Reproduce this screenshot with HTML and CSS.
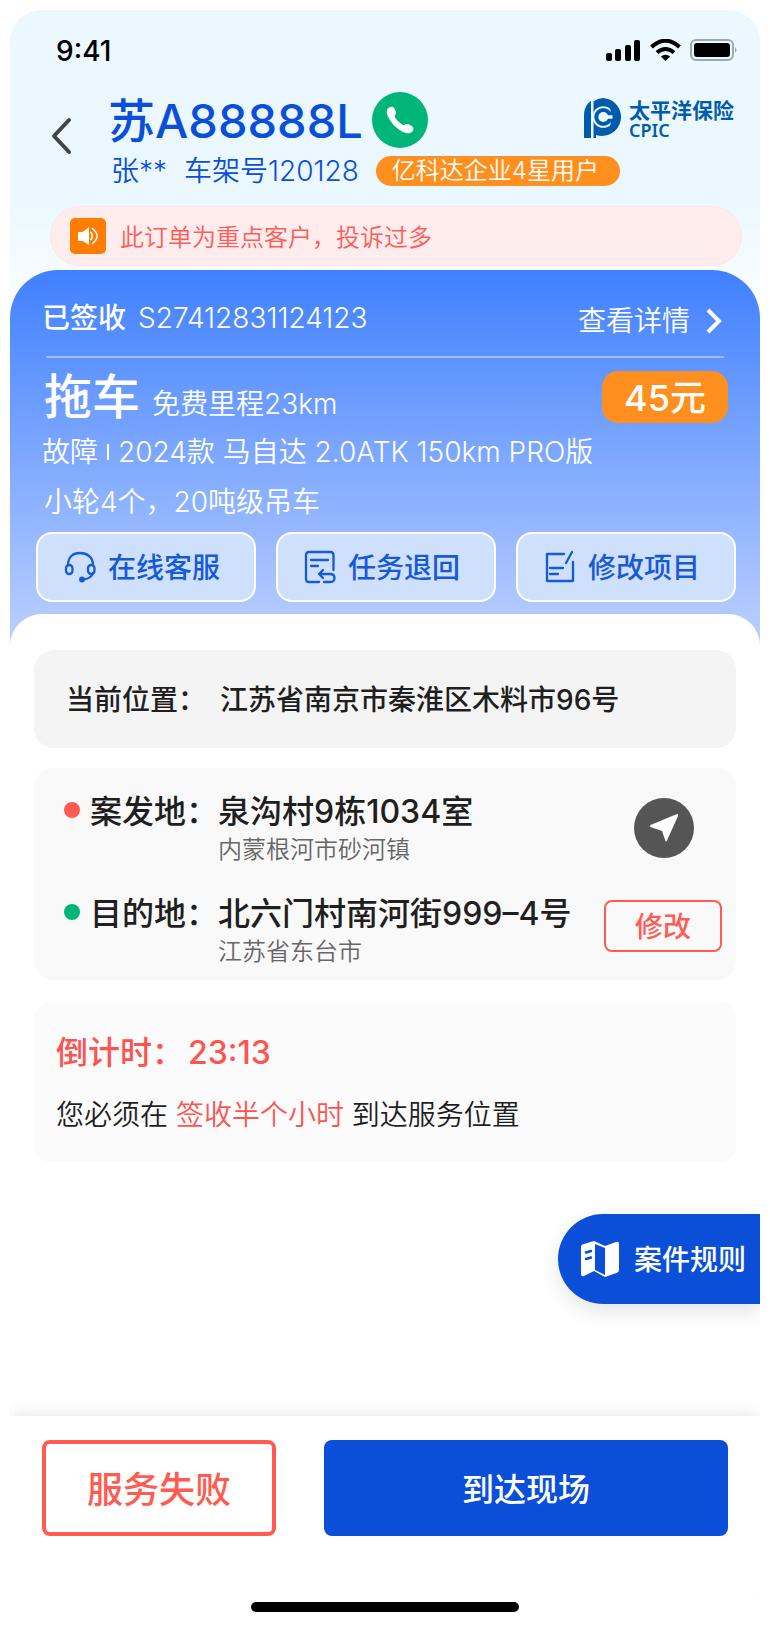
FILE: index.html
```html
<!DOCTYPE html>
<html lang="zh-CN">
<head>
<meta charset="utf-8">
<meta name="viewport" content="width=device-width, initial-scale=1">
<title>拖车任务</title>
<link rel="stylesheet" href="styles.css">
</head>
<body>
<div class="app">
  <header class="top">
    <div class="status-bar">
      <span class="clock">9:41</span>
      <svg class="status-icons" width="134" height="24" viewBox="0 0 134 24" aria-hidden="true">
        <rect x="0" y="14" width="6" height="8" rx="2"/>
        <rect x="9" y="10" width="6" height="12" rx="2"/>
        <rect x="19" y="6" width="6" height="16" rx="2"/>
        <rect x="28" y="1" width="6" height="21" rx="2"/>
        <g fill="none" stroke="#000" stroke-width="4">
          <path d="M45.500 8Q59.500 -4.500 73.500 8"/>
          <path d="M51 13.500Q59.500 6.500 68 13.500"/>
        </g>
        <path d="M59.500 22L54.800 17.600Q59.500 14 64.200 17.600Z"/>
        <rect x="85" y="1" width="42" height="20" rx="5" fill="none" stroke="#9fa8ad" stroke-width="2"/>
        <rect x="88" y="4" width="36" height="14" rx="3"/>
        <path d="M129 8Q132 11 129 14Z" fill="#9fa8ad"/>
      </svg>
    </div>
    <div class="title-bar">
      <button class="back" type="button" aria-label="返回">
        <svg width="22" height="38" viewBox="0 0 22 38"><path d="M19 3L4 19L19 35" fill="none" stroke="#444" stroke-width="4" stroke-linecap="round" stroke-linejoin="round"/></svg>
      </button>
      <div class="customer">
        <div class="plate-row">
          <h1 class="plate">苏A88888L</h1>
          <button class="call" type="button" aria-label="拨打电话">
            <svg width="28" height="28" viewBox="0 0 28 28"><path d="M3 1.500C5 .3 7.500 .5 8.500 2.500L10 6C10.500 7.500 9.500 8.800 8.500 10C9 13 15 18.500 18 19.200C19.500 18 21 17.500 22.500 18.300L25.800 20C27.500 21 28 23.500 26.800 25C24.500 28 20.500 28 16 25.500C9.500 22 4 15.500 1.500 9.500C.3 6.500 .5 3.200 3 1.500Z" fill="#fff"/></svg>
          </button>
        </div>
        <div class="owner-row">
          <span>张**</span>
          <span class="vin">车架号120128</span>
          <span class="user-tag">亿科达企业4星用户</span>
        </div>
      </div>
      <div class="insurer">
        <svg width="40" height="42" viewBox="0 0 40 42" fill="#005bac" aria-hidden="true">
          <path d="M8 4V41H1V18C1 12 3.500 7 8 4Z"/>
          <path d="M10.500 4.500A19 19 0 0 1 20 1A19 19 0 1 1 13 38V41H10.500Z"/>
          <circle cx="20.300" cy="20" r="10.800" fill="#ebf8ff"/>
          <path d="M27.500 9H33V31H27.500Z"/>
          <circle cx="20.300" cy="20" r="9"/>
          <circle cx="20.300" cy="20" r="5" fill="#ebf8ff"/>
          <path d="M22 18.300H29.500V21.700H22Z" fill="#ebf8ff"/>
        </svg>
        <div class="insurer-name">
          <span class="insurer-cn">太平洋保险</span>
          <span class="insurer-en">CPIC</span>
        </div>
      </div>
    </div>
    <p class="notice">
      <svg width="36" height="36" viewBox="0 0 36 36" aria-hidden="true">
        <rect width="36" height="36" rx="5" fill="#ff7d00"/>
        <path d="M8 14H12.500L19 9V27L12.500 23H8Z" fill="#fff"/>
        <path d="M21 14.500Q23.500 18 21 21.500M22.500 10.500Q31.500 18 22.500 25.500" fill="none" stroke="#fff" stroke-width="1.600" stroke-linecap="round"/>
      </svg>
      <span class="notice-text">此订单为重点客户，投诉过多</span>
    </p>
  </header>

  <section class="order">
    <div class="order-head">
      <strong class="order-state">已签收</strong>
      <span class="order-no">S27412831124123</span>
      <a class="detail-link" href="#detail">查看详情
        <svg width="16" height="26" viewBox="0 0 16 26" aria-hidden="true"><path d="M2 2L13 13L2 24" fill="none" stroke="#fff" stroke-width="4"/></svg>
      </a>
    </div>
    <div class="service-row">
      <h2 class="service">拖车</h2>
      <span class="mileage">免费里程23km</span>
      <span class="price">45元</span>
    </div>
    <p class="car"><span>故障</span><i class="bar"></i><span>2024款 马自达 2.0ATK 150km PRO版</span></p>
    <p class="extra">小轮4个，20吨级吊车</p>
    <div class="actions">
      <button class="action" type="button">
        <svg width="32" height="32" viewBox="0 0 32 32" fill="none" stroke="#165ad8" stroke-width="2.300" stroke-linecap="round" aria-hidden="true">
          <rect x="2" y="14" width="6.500" height="9" rx="3.200"/>
          <rect x="24" y="14" width="6.500" height="9" rx="3.200"/>
          <path d="M4 14C4 6 9 2 16 2S29 6 29 14M29 22Q27 28 19 28.500"/>
          <circle cx="18" cy="28.500" r="1.800" fill="#165ad8"/>
        </svg>
        <span class="action-text">在线客服</span>
      </button>
      <button class="action" type="button">
        <svg width="32" height="34" viewBox="0 0 32 34" fill="none" stroke="#165ad8" stroke-width="2.300" stroke-linecap="round" stroke-linejoin="round" aria-hidden="true">
          <path d="M29.500 20V5Q29.500 2 26.500 2H5Q2 2 2 5V29Q2 32 5 32H15M7 10H24M7 16H14M20 32H26Q30.500 32 30.500 28T26 24H15M19 20L15 24L19 28"/>
        </svg>
        <span class="action-text">任务退回</span>
      </button>
      <button class="action" type="button">
        <svg width="32" height="34" viewBox="0 0 32 34" fill="none" stroke="#165ad8" stroke-width="2.300" stroke-linecap="round" stroke-linejoin="round" aria-hidden="true">
          <path d="M20 4H3V31H29V12M28 2L22 13M6 18H19M6 24H14"/>
        </svg>
        <span class="action-text">修改项目</span>
      </button>
    </div>
  </section>

  <main class="sheet">
    <section class="card here">
      <span>当前位置：</span>
      <span>江苏省南京市秦淮区木料市96号</span>
    </section>

    <section class="card route">
      <div class="stop">
        <i class="dot dot-from"></i>
        <span class="stop-label">案发地：</span>
        <div class="stop-text">
          <strong class="stop-name">泉沟村9栋1034室</strong>
          <span class="stop-area">内蒙根河市砂河镇</span>
        </div>
        <button class="navigate" type="button" aria-label="导航">
          <svg width="30" height="30" viewBox="0 0 30 30"><path d="M28 1Q29.500 1 29 3L18 27.500Q17 29.500 16.300 27.500L13 18L1.500 14Q0 13 1.500 12Z" fill="#fff"/></svg>
        </button>
      </div>
      <div class="stop">
        <i class="dot dot-to"></i>
        <span class="stop-label">目的地：</span>
        <div class="stop-text">
          <strong class="stop-name">北六门村南河街999–4号</strong>
          <span class="stop-area">江苏省东台市</span>
        </div>
        <button class="edit" type="button">修改</button>
      </div>
    </section>

    <section class="card timer">
      <p class="countdown"><span>倒计时：</span><time>23:13</time></p>
      <p class="rule">您必须在 <em>签收半个小时</em> 到达服务位置</p>
    </section>

    <button class="rules" type="button">
      <svg width="40" height="38" viewBox="0 0 40 38" aria-hidden="true">
        <path d="M1 7Q1 5 3 4.300L14 1L25 6L36 2Q39 1 39 4V30Q39 32 37 32.800L25 37L14 31L4 36Q1 37 1 34Z" fill="#fff"/>
        <path d="M15 4L25 8V35L15 30Z" fill="#0b4fd9"/>
        <path d="M6 12.500L11 11M6 19L11 17.500" stroke="#0b4fd9" stroke-width="2.500" stroke-linecap="round"/>
      </svg>
      <span class="action-text">案件规则</span>
    </button>
  </main>

  <footer class="bottom">
    <div class="bottom-actions">
      <button class="fail" type="button">服务失败</button>
      <button class="arrive" type="button">到达现场</button>
    </div>
    <div class="home-indicator"></div>
  </footer>
</div>
</body>
</html>
```
FILE: styles.css
```css
* {
  box-sizing: border-box;
}

body {
  margin: 0;
  padding: 10px;
  background: #fff;
  color: #1f1f1f;
  font-family: Inter, "Noto Sans CJK SC", sans-serif;
  font-size: 28px;
  line-height: 40px;
  font-weight: 350;
}

h1,
h2,
p {
  margin: 0;
}

button {
  padding: 0;
  border: 0;
  background: none;
  color: inherit;
  font: inherit;
}

svg {
  display: block;
  flex: none;
}

.app {
  display: flex;
  flex-direction: column;
  overflow: hidden;
  border-radius: 32px;
  background: linear-gradient(#ebf8ff 0, #ebf8ff 190px, #fff 320px);
}

.top {
  padding: 21px 18px 4px 40px;
}

.status-bar {
  display: flex;
  align-items: center;
  justify-content: space-between;
  padding: 0 2px 0 6px;
  height: 40px;
}

.clock {
  color: #000;
  font-weight: 500;
}

.title-bar {
  display: flex;
  padding: 18px 8px 0 0;
}

.back {
  flex: none;
  align-self: flex-start;
  padding-top: 28px;
}

.customer {
  flex: 1;
  min-width: 0;
  padding-left: 36px;
  color: #0b4fd9;
}

.plate-row {
  display: flex;
  align-items: center;
  gap: 9px;
  height: 62px;
}

.plate {
  padding-top: 2px;
  font-size: 47px;
  line-height: 60px;
  font-weight: 500;
}

.call {
  display: flex;
  flex: none;
  align-items: center;
  justify-content: center;
  width: 56px;
  height: 56px;
  border-radius: 50%;
  background: #00b578;
}

.owner-row {
  display: flex;
  align-items: center;
  gap: 17px;
  padding-left: 3px;
  white-space: nowrap;
}

.user-tag {
  padding: 0 21px 0 16px;
  border-radius: 15px;
  background: #ff8f1f;
  color: #fff;
  font-size: 24px;
  line-height: 30px;
}

.insurer {
  display: flex;
  flex: none;
  align-items: flex-start;
  gap: 6px;
  padding-top: 8px;
  color: #005bac;
}

.insurer-name {
  display: flex;
  flex-direction: column;
  padding-top: 2px;
  font-weight: 700;
  white-space: nowrap;
}

.insurer-cn {
  font-size: 21px;
  line-height: 24px;
}

.insurer-en {
  font-family: "Noto Sans", sans-serif;
  font-size: 18px;
  line-height: 15px;
  font-weight: 600;
}

.notice {
  display: flex;
  align-items: center;
  gap: 14px;
  height: 60px;
  margin-top: 15px;
  padding: 0 19px;
  border: 1px solid #ffe4e4;
  border-radius: 30px;
  background: #ffecec;
  color: #ff5b57;
  font-size: 24px;
}

.notice-text {
  padding-top: 4px;
}

.order {
  padding: 24px 24px 44px;
  border-radius: 48px 48px 0 0;
  background: linear-gradient(#4080ff, #bdd1ff);
  color: #fff;
}

.order-head {
  display: flex;
  align-items: center;
  gap: 12px;
  height: 64px;
  margin: 0 12px;
  padding: 0 2px 14px 0;
  border-bottom: 2px solid rgba(255, 255, 255, .4);
}

.order-state {
  margin-left: -4px;
  font-weight: 500;
}

.order-no {
  font-weight: 300;
}

.detail-link {
  display: flex;
  align-items: center;
  gap: 16px;
  margin-left: auto;
  padding-top: 6px;
  color: #fff;
  text-decoration: none;
}

.service-row {
  display: flex;
  align-items: center;
  gap: 12px;
  height: 74px;
  padding: 4px 8px 0 10px;
}

.service {
  font-size: 48px;
  font-weight: 500;
}

.mileage {
  padding-top: 14px;
}

.price {
  margin-left: auto;
  padding: 2px 22px 0;
  border-radius: 16px;
  background: #ff8f1f;
  font-size: 36px;
  line-height: 50px;
  font-weight: 500;
}

.car {
  display: flex;
  align-items: center;
  gap: 9px;
  padding-left: 8px;
  white-space: nowrap;
}

.bar {
  width: 2px;
  height: 16px;
  background: #fff;
}

.extra {
  padding: 10px 10px 0;
}

.actions {
  display: grid;
  grid-template-columns: repeat(3, 1fr);
  gap: 20px;
  margin: 10px 0 0;
  padding: 0 0 0 2px;
}

.action {
  display: flex;
  align-items: center;
  justify-content: center;
  gap: 12px;
  height: 70px;
  padding-right: 8px;
  border: 2px solid #fff;
  border-radius: 16px;
  background: #cee0fc;
  color: #165ad8;
  font-weight: 500;
}

.action-text {
  padding-top: 2px;
}

.sheet {
  display: flex;
  flex-direction: column;
  margin-top: -32px;
  padding: 36px 0 112px 24px;
  border-radius: 32px 32px 0 0;
  background: #fff;
}

.card {
  margin-right: 24px;
  border-radius: 20px;
}

.here {
  display: flex;
  gap: 14px;
  padding: 30px 32px 28px;
  background: #f4f4f4;
  font-weight: 500;
}

.route {
  display: flex;
  flex-direction: column;
  gap: 24px;
  margin-top: 20px;
  padding: 22px 14px 10px 30px;
  background: #f9f9f9;
}

.stop {
  display: flex;
  align-items: flex-start;
}

.dot {
  width: 16px;
  height: 16px;
  margin: 12px 10px 0 0;
  border-radius: 50%;
}

.dot-from {
  background: #ff5b50;
}

.dot-to {
  background: #00b578;
}

.stop-label,
.stop-name {
  padding-top: 2px;
  font-size: 32px;
  font-weight: 500;
  white-space: nowrap;
}

.stop-text {
  display: flex;
  flex: 1;
  flex-direction: column;
}

.stop-area {
  color: #666;
  font-size: 24px;
  line-height: 36px;
}

.navigate {
  display: flex;
  align-items: center;
  justify-content: center;
  width: 60px;
  height: 60px;
  margin: 8px 28px 0 0;
  border-radius: 50%;
  background: #555;
}

.edit {
  width: 118px;
  height: 52px;
  margin-top: 8px;
  padding-top: 2px;
  border: 2px solid #ff5b50;
  border-radius: 8px;
  color: #ff5b57;
  font-weight: 500;
}

.timer {
  margin-top: 22px;
  padding: 31px 22px 27px;
  border-radius: 16px;
  background: #fbfbfb;
}

.countdown {
  display: flex;
  gap: 4px;
  color: #ff5350;
  font-size: 32px;
  font-weight: 500;
}

.rule {
  padding-top: 22px;
}

.rule em {
  color: #ff5350;
  font-style: normal;
}

.rules {
  display: flex;
  align-items: center;
  align-self: flex-end;
  gap: 14px;
  height: 90px;
  margin-top: 52px;
  padding: 0 14px 0 22px;
  border-radius: 45px 0 0 45px;
  background: #0b4fd9;
  box-shadow: 0 8px 20px rgba(0, 0, 0, .1);
  color: #fff;
  font-weight: 500;
}

.bottom {
  padding: 24px 32px 14px;
  background: #fff;
  box-shadow: 0 0 16px rgba(0, 0, 0, .12);
}

.bottom-actions {
  display: grid;
  grid-template-columns: 234fr 404fr;
  gap: 48px;
}

.fail,
.arrive {
  height: 96px;
  padding-top: 4px;
  border-radius: 8px;
  font-weight: 500;
}

.fail {
  border: 4px solid #ff5b50;
  color: #ff5b50;
  font-size: 36px;
}

.arrive {
  background: #0b4fd9;
  color: #fff;
  font-size: 32px;
}

.home-indicator {
  width: 268px;
  height: 10px;
  margin: 66px auto 0;
  border-radius: 5px;
  background: #000;
}
```
